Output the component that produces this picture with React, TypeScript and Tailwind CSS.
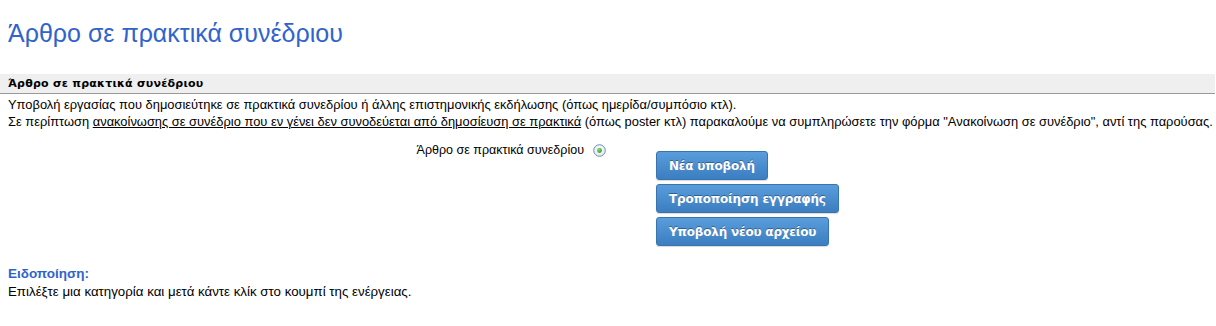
import React from "react";

const sans = "font-['Liberation_Sans','Noto_Sans',Arial,sans-serif]";
const verdana = "font-['DejaVu_Sans','Noto_Sans',Verdana,sans-serif]";

function Radio() {
  return (
    <svg width="13" height="13" viewBox="0 0 13 13" className="block">
      <defs>
        <radialGradient id="rg" cx="50%" cy="40%" r="60%">
          <stop offset="0%" stopColor="#ffffff" />
          <stop offset="100%" stopColor="#e6e6e6" />
        </radialGradient>
        <radialGradient id="dot" cx="40%" cy="35%" r="70%">
          <stop offset="0%" stopColor="#7fe07a" />
          <stop offset="100%" stopColor="#1f9a20" />
        </radialGradient>
      </defs>
      <circle cx="6.5" cy="6.5" r="5.8" fill="url(#rg)" stroke="#6d8fb1" strokeWidth="1" />
      <circle cx="6.5" cy="6.5" r="2.4" fill="url(#dot)" />
    </svg>
  );
}

function Btn({ children }: { children: React.ReactNode }) {
  return (
    <button
      className={`${verdana} h-[29px] px-[12px] rounded-[3px] border border-[#3a74ad] bg-gradient-to-b from-[#5a9ddc] to-[#3b7ec1] text-white text-[12px] font-bold tracking-[-0.2px] [text-shadow:0_-1px_0_rgba(0,0,0,0.35)] shadow-[0_1px_1px_rgba(0,0,0,0.15)] leading-none`}
    >
      {children}
    </button>
  );
}

export default function App() {
  return (
    <div className={`${sans} bg-white text-black w-[1216px] h-[326px] overflow-hidden`}>
      <h1 className="pl-[8px] pt-[19px] text-[25px] leading-[28px] text-[#3064cc] font-normal">
        Άρθρο σε πρακτικά συνέδριου
      </h1>

      <div className="mt-[27px] w-[1215px] h-[20px] bg-[#efefef] border-b border-[#999999] pl-[8px] flex items-center">
        <span className={`${verdana} text-[11px] tracking-[0.25px] font-bold leading-none`}>Άρθρο σε πρακτικά συνέδριου</span>
      </div>

      <div className="pl-[8px] pt-[2px] text-[12.9px] leading-[17px] whitespace-nowrap">
        <div>
          Υποβολή εργασίας που δημοσιεύτηκε σε πρακτικά συνεδρίου ή άλλης επιστημονικής εκδήλωσης (όπως ημερίδα/συμπόσιο κτλ).
        </div>
        <div>
          Σε περίπτωση{" "}
          <span className="underline">ανακοίνωσης σε συνέδριο που εν γένει δεν συνοδεύεται από δημοσίευση σε πρακτικά</span>{" "}
          (όπως poster κτλ) παρακαλούμε να συμπληρώσετε την φόρμα "Ανακοίνωση σε συνέδριο", αντί της παρούσας.
        </div>
      </div>

      <div className="mt-[12px] flex">
        <div className="w-[606px] flex justify-end items-start gap-[9px] text-[12.5px] leading-[16px]">
          <span>Άρθρο σε πρακτικά συνεδρίου</span>
          <span className="pt-[2px]">
            <Radio />
          </span>
        </div>
        <div className="ml-[50px] pt-[9px] flex flex-col items-start gap-[4px]">
          <Btn>Νέα υποβολή</Btn>
          <Btn>Τροποποίηση εγγραφής</Btn>
          <Btn>Υποβολή νέου αρχείου</Btn>
        </div>
      </div>

      <div className="pl-[8px] mt-[19px] text-[13.3px] leading-[18px]">
        <div className="font-bold text-[#3064cc] text-[13.5px]">Ειδοποίηση:</div>
        <div>Επιλέξτε μια κατηγορία και μετά κάντε κλίκ στο κουμπί της ενέργειας.</div>
      </div>
    </div>
  );
}
